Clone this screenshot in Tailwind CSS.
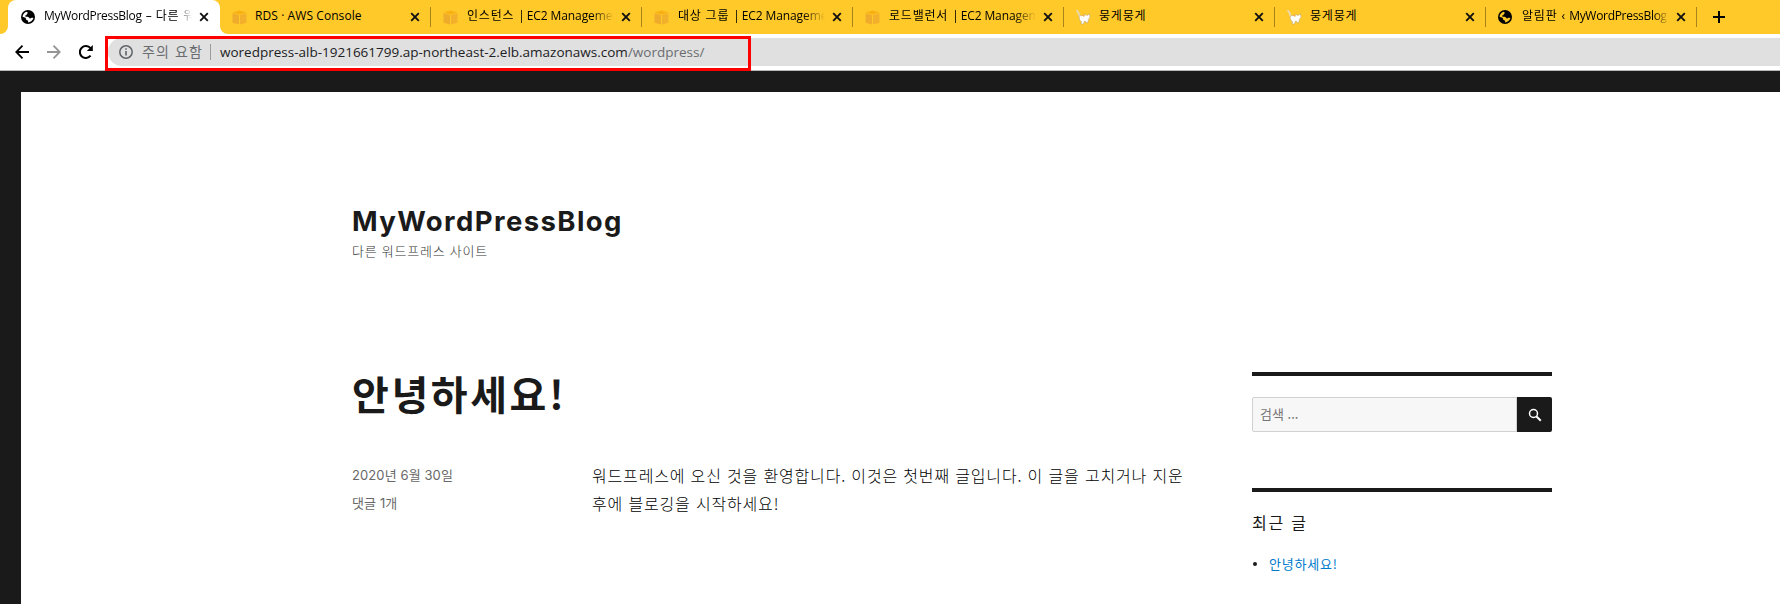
<!DOCTYPE html>
<html lang="ko">
<head>
<meta charset="utf-8">
<title>MyWordPressBlog – 다른 워드프레스 사이트</title>
<script src="https://cdn.jsdelivr.net/npm/@tailwindcss/browser@4"></script>
</head>
<body class="h-[604px] overflow-hidden bg-[#1a1a1a] font-['Open_Sans','Noto_Sans_CJK_KR',sans-serif] text-black">

<svg class="hidden">
  <symbol id="globe" viewBox="0 0 24 24"><circle cx="12" cy="12" r="12"/><path fill="currentColor" d="M2.600 11.500c.2-2 1-4 2.400-5.600 1.200-1.300 2.500-2.200 4-2.800l2.500 1.200c.8.6.2 1.300-.6 1.700-1 .5-1.300 1.200-1.200 2 .1.8-.8 1-1.700 1.200-1 .3-1 1.300-.5 2 1 .6 3.500.3 5 .8 1.600.6 1.600 2.500 3 2.600 1.600.1 2-1.200 3.300-1.200.9 0 1.800.4 2.400.5-.5 2.200-1.800 4.100-3.700 5.500-1.600 1.200-3.400 1.900-5.300 2-.4-.8.5-1.900 0-2.700-.7-1.200-2.400-1-3.200-2.100-.7-1-.3-2.300-1.300-3.200-1.300-1.200-3.800-1-5.100-1.900z"/></symbol>
  <symbol id="cube" viewBox="0 0 15 15"><path d="M.5 2.500 7.500.5l7 2-7 2z" fill="#f9b014"/><path d="M.5 3.300 7 5v9.500L.5 12.700z" fill="#efac2c"/><path d="M14.500 3.300 8 5v9.500l6.500-1.800z" fill="#f3b02c"/></symbol>
  <symbol id="cat" viewBox="0 0 16 16"><path d="M1.200 1c-.5 1.500.8 2 1.300 3s.3 2 1.200 3.200" fill="none" stroke="#e8d9b0" stroke-width="1.800"/><path d="M3 7.500c1.800-1.500 4-.2 5.800-2.200l1.200.9h1.800l1.500-1.400.7 3.400-1.500 2-.8 3.600-1.700-.3-.5-1.200H8.200L7.600 15H5.200l.2-2.500L3.600 11z" fill="#fff" stroke="#b9a77a" stroke-width=".6"/><path d="M6 6.500l2.800-1-.6 2.600z" fill="#f0a52a"/></symbol>
  <symbol id="x" viewBox="0 0 10 10"><path d="M1.200 1.200l7.600 7.600M8.800 1.200L1.200 8.800" stroke="#111" stroke-width="1.900" fill="none"/></symbol>
</svg>

<!-- Tab strip -->
<div class="flex h-[34px] items-stretch overflow-hidden bg-[#ffc929] text-[12px] leading-[32px] whitespace-nowrap">
  <div class="w-2 bg-white"><div class="h-full rounded-br-lg bg-[#ffc929]"></div></div>
  <div class="flex w-[212px] items-start rounded-t-lg bg-white pl-[13px]">
    <svg class="mt-[10px] h-[14px] w-[14px] text-white"><use href="#globe"/></svg>
    <div class="ml-[9px] w-[148px] overflow-hidden mask-r-from-90% mask-r-to-100%"><span class="tracking-[-0.3px]">MyWordPressBlog</span><span class="ml-[4px]">–</span><span class="ml-[4px] tracking-[0.8px]">다른 워드</span></div>
    <svg class="mt-[12px] ml-[7px] h-[10px] w-[10px]"><use href="#x"/></svg>
  </div>
  <div class="w-[11px] bg-white"><div class="h-full rounded-bl-lg bg-[#ffc929]"></div></div>
  <div class="flex w-[199px] items-start">
    <svg class="mt-[10px] ml-px h-[15px] w-[15px]"><use href="#cube"/></svg>
    <div class="ml-[8px] w-[147px] overflow-hidden tracking-[0.08px]">RDS · AWS Console</div>
    <svg class="mt-[12px] ml-[8px] h-[10px] w-[10px]"><use href="#x"/></svg>
  </div>
  <div class="flex w-[211px] items-start">
    <div class="mt-[7px] h-5 w-px bg-[#a8841b]"></div>
    <svg class="mt-[10px] ml-[12px] h-[15px] w-[15px]"><use href="#cube"/></svg>
    <div class="ml-[9px] w-[147px] overflow-hidden mask-r-from-85% mask-r-to-100%"><span class="tracking-[0.8px]">인스턴스 </span><span class="tracking-[-0.1px]">|</span><span class="ml-[2px] tracking-[-0.1px]">EC2 Management</span></div>
    <svg class="mt-[12px] ml-[7px] h-[10px] w-[10px]"><use href="#x"/></svg>
  </div>
  <div class="flex w-[211px] items-start">
    <div class="mt-[7px] h-5 w-px bg-[#a8841b]"></div>
    <svg class="mt-[10px] ml-[12px] h-[15px] w-[15px]"><use href="#cube"/></svg>
    <div class="ml-[9px] w-[147px] overflow-hidden mask-r-from-85% mask-r-to-100%"><span class="tracking-[0.8px]">대상 그룹 </span><span class="tracking-[-0.1px]">|</span><span class="ml-[2px] tracking-[-0.1px]">EC2 Management</span></div>
    <svg class="mt-[12px] ml-[7px] h-[10px] w-[10px]"><use href="#x"/></svg>
  </div>
  <div class="flex w-[211px] items-start">
    <div class="mt-[7px] h-5 w-px bg-[#a8841b]"></div>
    <svg class="mt-[10px] ml-[12px] h-[15px] w-[15px]"><use href="#cube"/></svg>
    <div class="ml-[9px] w-[147px] overflow-hidden mask-r-from-85% mask-r-to-100%"><span class="tracking-[0.8px]">로드밸런서 </span><span class="tracking-[-0.1px]">|</span><span class="ml-[2px] tracking-[-0.1px]">EC2 Management</span></div>
    <svg class="mt-[12px] ml-[7px] h-[10px] w-[10px]"><use href="#x"/></svg>
  </div>
  <div class="flex w-[211px] items-start">
    <div class="mt-[7px] h-5 w-px bg-[#a8841b]"></div>
    <svg class="mt-[9px] ml-[12px] h-4 w-4"><use href="#cat"/></svg>
    <div class="ml-[7px] w-[148px] overflow-hidden tracking-[0.8px]">뭉게뭉게</div>
    <svg class="mt-[12px] ml-[7px] h-[10px] w-[10px]"><use href="#x"/></svg>
  </div>
  <div class="flex w-[211px] items-start">
    <div class="mt-[7px] h-5 w-px bg-[#a8841b]"></div>
    <svg class="mt-[9px] ml-[12px] h-4 w-4"><use href="#cat"/></svg>
    <div class="ml-[7px] w-[148px] overflow-hidden tracking-[0.8px]">뭉게뭉게</div>
    <svg class="mt-[12px] ml-[7px] h-[10px] w-[10px]"><use href="#x"/></svg>
  </div>
  <div class="flex w-[211px] items-start">
    <div class="mt-[7px] h-5 w-px bg-[#a8841b]"></div>
    <svg class="mt-[10px] ml-[12px] h-[14px] w-[14px] text-[#ffc929]"><use href="#globe"/></svg>
    <div class="ml-[10px] w-[147px] overflow-hidden mask-r-from-90% mask-r-to-100%"><span class="tracking-[0.8px]">알림판</span><span class="ml-[4px]">‹</span><span class="ml-[4px] tracking-[-0.3px]">MyWordPressBlog</span></div>
    <svg class="mt-[12px] ml-[7px] h-[10px] w-[10px]"><use href="#x"/></svg>
  </div>
  <div class="mt-[7px] h-5 w-px bg-[#a8841b]"></div>
  <svg class="mt-[11px] ml-[16px] h-3 w-3" viewBox="0 0 12 12"><path d="M6 0v12M0 6h12" stroke="#000" stroke-width="2"/></svg>
</div>

<!-- Toolbar -->
<div class="flex h-[37px] items-start border-b border-[#b5bab8] bg-white">
  <svg class="mt-[11px] ml-[15px] h-[14px] w-[14px]" viewBox="0 0 14 14" fill="none" stroke="#000" stroke-width="1.800"><path d="M14 7H1.500M7.500.7L1.300 7l6.200 6.300"/></svg>
  <svg class="mt-[11px] ml-[18px] h-[14px] w-[14px]" viewBox="0 0 14 14" fill="none" stroke="#959595" stroke-width="1.800"><path d="M0 7h12.500M6.500.7L12.700 7l-6.200 6.300"/></svg>
  <svg class="mt-[11px] ml-[18px] h-[14px] w-[14px]" viewBox="0 0 14 14"><path d="M11.600 10.700A6 6 0 1 1 11.500 3.200" fill="none" stroke="#000" stroke-width="2"/><path d="M13.800 0v6H7.800z"/></svg>
  <div class="relative mt-[4px] ml-[15px] h-[28px] flex-1 rounded-l-full bg-[#e0e0e0] text-[13.500px] leading-[28px] whitespace-nowrap">
    <div class="flex items-start">
      <svg class="mt-[7px] ml-[11px] h-[14px] w-[14px]" viewBox="0 0 14 14"><circle cx="7" cy="7" r="6.200" fill="none" stroke="#5f6368" stroke-width="1.500"/><path d="M7 6v4.500M7 3.300v1.500" stroke="#5f6368" stroke-width="1.600"/></svg>
      <span class="ml-[9px] w-[61px] text-[14px] tracking-[1.200px] text-[#6a6d70]">주의 요함</span>
      <div class="mt-[6px] ml-[7px] h-4 w-px bg-[#9b9b9b]"></div>
      <span class="ml-[9px] text-[#202124]">woredpress-alb-1921661799.ap-northeast-2.elb.amazonaws.com<span class="text-[#6a6d70]">/wordpress/</span></span>
    </div>
    <div class="absolute -top-[2px] -left-[3px] h-[35px] w-[646px] border-3 border-[#fe0000]"></div>
  </div>
</div>

<!-- Page -->
<div class="mt-[21px] ml-[21px] h-[512px] bg-white pl-[331px] text-[#1a1a1a]">
  <header class="pt-[110px]">
    <h1 class="h-[38px] font-['Inter',sans-serif] text-[27.500px] leading-[38px] font-bold tracking-[1.400px]">MyWordPressBlog</h1>
    <p class="h-[22px] font-['Noto_Sans_CJK_KR',sans-serif] text-[13px] leading-[22px] font-light tracking-[0.750px] text-[#333]">다른 워드프레스 사이트</p>
  </header>
  <div class="mt-[110px] flex">
    <main class="w-[900px]">
      <h2 class="h-[49px] font-['Noto_Sans_CJK_KR',sans-serif] text-[40px] leading-[43px] font-bold tracking-[2.600px]">안녕하세요!</h2>
      <div class="mt-[40px] flex">
        <div class="w-[240px] font-['Inter','Noto_Sans_CJK_KR',sans-serif] text-[13px] leading-[28px] tracking-[0.1px] text-[#686868]"><p>2020년 6월 30일</p><p>댓글 1개</p></div>
        <p class="font-['Noto_Sans_CJK_KR',sans-serif] text-[16px] leading-[28px] font-light tracking-[0.830px] whitespace-nowrap text-black">워드프레스에 오신 것을 환영합니다. 이것은 첫번째 글입니다. 이 글을 고치거나 지운<br>후에 블로깅을 시작하세요!</p>
      </div>
    </main>
    <aside class="w-[300px] font-['Noto_Sans_CJK_KR',sans-serif]">
      <section class="border-t-4 border-[#1a1a1a] pt-[21px]">
        <div class="flex h-[35px]">
          <div class="flex-1 rounded-l-xs border border-[#d1d1d1] bg-[#f7f7f7] pl-[7px] text-[13px] leading-[31px] text-[#757575]">검색 ...</div>
          <div class="flex w-[35px] items-center justify-center rounded-r-xs bg-[#1a1a1a]"><svg class="h-[14px] w-[14px]" viewBox="0 0 14 14" fill="none" stroke="#fff"><circle cx="5.500" cy="5.500" r="4" stroke-width="1.500"/><path d="M8.500 8.500l4.300 4.300" stroke-width="2"/></svg></div>
        </div>
      </section>
      <section class="mt-[56px] border-t-4 border-[#1a1a1a] pt-[20px]">
        <h3 class="text-[16px] leading-[21px] tracking-[1.800px]">최근 글</h3>
        <ul class="mt-[19px] flex items-center text-[13px] leading-[24px]">
          <li class="ml-[1px] h-1 w-1 rounded-full bg-[#1a1a1a]"></li>
          <li class="ml-[12px] tracking-[0.8px] text-[#007acc]">안녕하세요!</li>
        </ul>
      </section>
    </aside>
  </div>
</div>
</body>
</html>
